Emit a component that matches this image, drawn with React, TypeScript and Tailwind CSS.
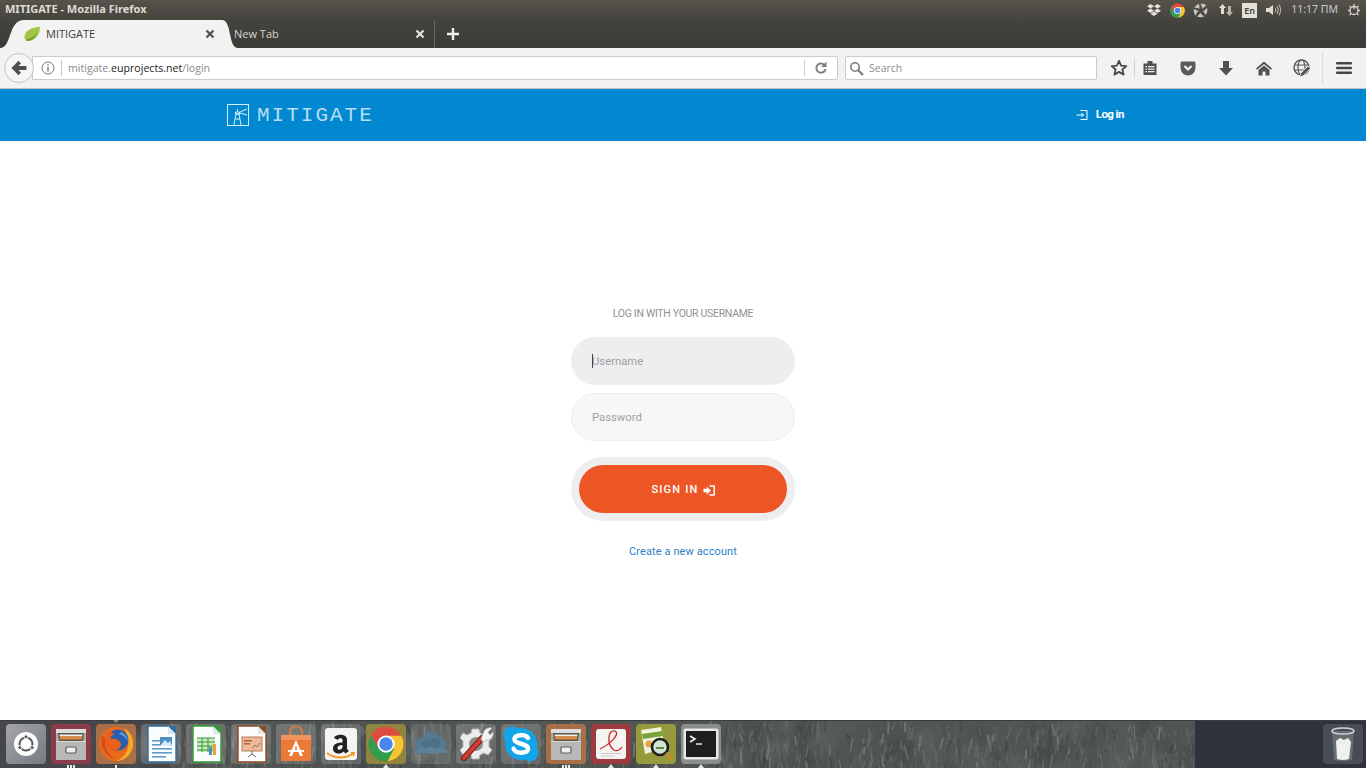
import React from "react";
import { FaDropbox } from "react-icons/fa";

function ChromeIcon({ size }: { size: number }) {
  return (
    <svg width={size} height={size} viewBox="0 0 48 48">
      <circle cx="24" cy="24" r="23" fill="#dd4b3e" />
      <path d="M24 13 H44.5 A23 23 0 0 1 26 47 L24 24 Z" fill="#f7c531" />
      <path d="M4 12.5 A23 23 0 0 0 26 47 L35 30 H14 Z" fill="#2f9e4f" />
      <circle cx="24" cy="24" r="11.5" fill="#fff" />
      <circle cx="24" cy="24" r="9" fill="#4b84ec" />
    </svg>
  );
}

function Tile({ bg, children, pips = 0, tri = false, top = false }: { bg: string; children: React.ReactNode; pips?: number; tri?: boolean; top?: boolean }) {
  return (
    <div className="relative flex h-10 w-10 shrink-0 items-center justify-center rounded-[4px]" style={{ background: bg }}>
      <div className="flex blur-[0.3px]">{children}</div>
      {pips > 0 && (
        <div className="absolute bottom-[-4px] left-1/2 flex -translate-x-1/2 gap-[1px]">
          {Array.from({ length: pips }).map((_, i) => (
            <div key={i} className="h-[3px] w-[2px] bg-[#e8e8e8]" />
          ))}
        </div>
      )}
      {tri && (
        <div className="absolute bottom-[-4px] left-1/2 h-0 w-0 -translate-x-1/2 border-x-[3px] border-b-[4px] border-x-transparent border-b-[#e8e8e8]" />
      )}
      {top && (
        <div className="absolute top-[-4px] left-1/2 h-0 w-0 -translate-x-1/2 border-x-[3px] border-t-[3px] border-x-transparent border-t-[#8a8a8a]" />
      )}
    </div>
  );
}

const glass = "linear-gradient(135deg,rgba(255,255,255,0.2),rgba(255,255,255,0.12))";

function Cabinet() {
  return (
    <svg width="36" height="36" viewBox="0 0 36 36">
      <rect x="3" y="3" width="30" height="31" rx="2" fill="#a9aba9" />
      <rect x="3" y="3" width="30" height="4" fill="#dcdcda" />
      <path d="M5 7 H31 L30 15 H6 Z" fill="#5b5650" />
      <path d="M6.5 8.5 H29.5 L29.2 10.5 H6.8 Z" fill="#f3efe6" />
      <path d="M6.8 10.5 H29.2 L28.8 13.5 H7.2 Z" fill="#e6873c" />
      <rect x="3" y="15" width="30" height="19" fill="#b8b9b7" />
      <rect x="3" y="15" width="30" height="1" fill="#d8d8d6" />
      <rect x="13" y="21" width="10" height="6" rx="1" fill="#efefed" stroke="#5c5c5c" strokeWidth="1.2" />
    </svg>
  );
}

function Doc({ color, children }: { color: string; children: React.ReactNode }) {
  return (
    <svg width="36" height="38" viewBox="0 0 36 38">
      <path d="M5 1 H25 L33 9 V37 H5 Z" fill="#fbfcfd" stroke={color} strokeWidth="1.4" />
      <path d="M25 1 L33 1 V9 Z" fill={color} />
      <path d="M25 1 V9 H33 Z" fill="#dfe5ea" />
      {children}
    </svg>
  );
}

const noise = (() => {
  let s = 12345;
  const r = () => {
    s = (s * 16807) % 2147483647;
    return s / 2147483647;
  };
  const cols = ["#6a6e69", "#5c625c", "#43474a", "#72766c", "#3d4143", "#666a62", "#7d8286", "#4f5a52"];
  const lines: { d: string; c: string; o: number; w: number }[] = [];
  for (let i = 0; i < 1300; i++) {
    const x = 170 + r() * 1025;
    const y = r() * 48;
    const dx = (r() - 0.5) * 7;
    const dy = 4 + r() * 12;
    lines.push({ d: `M${x.toFixed(1)} ${y.toFixed(1)}l${dx.toFixed(1)} ${dy.toFixed(1)}`, c: cols[Math.floor(r() * cols.length)], o: 0.3 + r() * 0.4, w: 0.8 + r() * 1.4 });
  }
  const blobs: { x: number; y: number; r: number; c: string; o: number }[] = [];
  for (let i = 0; i < 160; i++) {
    blobs.push({ x: r() * 1195, y: r() * 48, r: 4 + r() * 10, c: r() > 0.5 ? "#6a6f72" : "#383b3f", o: 0.12 + r() * 0.2 });
  }
  return { lines, blobs };
})();

export default function App() {
  return (
    <div className="flex h-[768px] w-[1366px] flex-col overflow-hidden bg-white font-['Roboto',sans-serif]">
      {/* title bar */}
      <div className="flex h-5 shrink-0 items-center justify-between bg-gradient-to-b from-[#55534c] to-[#45433d]">
        <div className="pb-[2px] pl-[5px] font-['Noto_Sans',sans-serif] text-[11px] font-bold text-[#dfdbd2]">MITIGATE - Mozilla Firefox</div>
        <div className="flex items-center font-['Noto_Sans',sans-serif] text-[#dfdbd2]">
          <FaDropbox size={14} className="mr-[9px] text-[#e6e3dd]" />
          <div className="mr-[8px] flex"><ChromeIcon size={15} /></div>
          <svg width="15" height="15" viewBox="0 0 16 16" className="mr-[11px]" fill="#c9c6bf">
            <path d="M8 1 C11 0.5 13 1 14 2.5 L10 6 C10 4.5 9 3 8 1 Z" />
            <path d="M15 5 C16 8 15 11 13.5 12.5 L10.5 8.5 C12 8.5 13.5 7 15 5 Z" />
            <path d="M12 14 C9.5 15.5 7 15.5 4.5 14.5 L8 10.5 C8.7 12 10 13.2 12 14 Z" />
            <path d="M3 13.5 C1 11.5 0.5 9 1 6.5 L6 8.5 C4.5 9.5 3.5 11.3 3 13.5 Z" />
            <path d="M1.5 5 C2.5 3 4.5 1.5 6.5 1 L7 6 C5.5 5.5 3.5 5 1.5 5 Z" />
          </svg>
          <svg width="14" height="14" viewBox="0 0 14 14" className="mr-[9px]" fill="#dfdbd2">
            <path d="M3.5 1 L7 5 H5 V11 H2 V5 H0 Z" />
            <path d="M10.5 13 L14 9 H12 V3 H9 V9 H7 Z" fill="#b7b4ad" />
          </svg>
          <div className="mr-[8px] flex h-[15px] w-[15px] items-center justify-center bg-[#e4e1da] text-[9px] font-semibold leading-none text-[#3e3d38]">En</div>
          <svg width="16" height="14" viewBox="0 0 16 14" className="mr-[10px]" fill="none" stroke="#c9c6bf" strokeWidth="1">
            <path d="M1 5 H4 L8 2 V12 L4 9 H1 Z" fill="#dfdbd2" stroke="none" />
            <path d="M10 4.5 C11 6 11 8 10 9.5 M12 3 C13.6 5.5 13.6 8.5 12 11 M14 1.5 C16 5 16 9 14 12.5" />
          </svg>
          <div className="mr-[9px] text-[10.5px] text-[#c4c8d0]">11:17 ПМ</div>
          <svg width="14" height="14" viewBox="0 0 14 14" className="mr-[5px]" fill="none" stroke="#d6d3cc" strokeWidth="1.3">
            <circle cx="7" cy="7.5" r="4" />
            <path d="M7 1 V6 M1 7.5 H3 M11 7.5 H13 M2.5 3 L4 4.5 M11.5 3 L10 4.5 M2.5 12 L4 10.5 M11.5 12 L10 10.5" />
          </svg>
        </div>
      </div>

      {/* tab bar */}
      <div className="flex h-7 shrink-0 items-end bg-gradient-to-b from-[#45433d] to-[#3b3a35] font-['Open_Sans',sans-serif] text-[11px]">
        <svg width="24" height="28" viewBox="0 0 24 28" className="shrink-0"><path d="M0 28 C12 28 8 0 24 0 V28 Z" fill="#f2f2f2" /></svg>
        <div className="flex h-7 w-[198px] shrink-0 items-center bg-[#f2f2f2] text-[#3c3c3c]">
          <svg width="17" height="16" viewBox="0 0 17 16" className="mr-[5px] shrink-0">
            <path d="M0.5 12 C0 5 7 1 16 1 C16 9 11 15 4 15 C3 15 1.5 14 0.5 12 Z" fill="#a3c644" />
            <path d="M1 14 C5 13 11 11 14 5 C12 10 9 14 4 15 Z" fill="#6f9a2e" />
          </svg>
          <span className="flex-1">MITIGATE</span>
          <svg width="10" height="10" viewBox="0 0 10 10" className="mr-[7px]"><path d="M1.5 1.5 L8.5 8.5 M8.5 1.5 L1.5 8.5" stroke="#555" strokeWidth="2.4" /></svg>
        </div>
        <svg width="16" height="28" viewBox="0 0 16 28" className="shrink-0"><path d="M0 0 C10 0 6 28 16 28 H0 Z" fill="#f2f2f2" /></svg>
        <div className="-ml-[4px] flex h-7 w-[191px] shrink-0 items-center text-[#d8d6cf]">
          <span className="flex-1">New Tab</span>
          <svg width="10" height="10" viewBox="0 0 10 10"><path d="M1.5 1.5 L8.5 8.5 M8.5 1.5 L1.5 8.5" stroke="#e4e2dc" strokeWidth="2.2" /></svg>
        </div>
        <div className="ml-[9px] flex h-7 items-center border-l border-[#6a6861] pl-[11px]">
          <svg width="14" height="14" viewBox="0 0 14 14"><path d="M7 1 V13 M1 7 H13" stroke="#f0eee9" strokeWidth="2.4" /></svg>
        </div>
      </div>

      {/* nav bar */}
      <div className="flex h-[41px] shrink-0 items-center border-b border-[#c4c4c4] bg-[#f2f2f2]">
        <div className="relative z-10 ml-[4px] flex h-[30px] w-[30px] shrink-0 items-center justify-center rounded-full border border-[#c4c4c4] bg-[#f6f6f6]">
          <svg width="16" height="16" viewBox="0 0 16 16" fill="#4f4f4f"><path d="M7.5 0.8 L0.5 8 L7.5 15.2 L10 12.8 L7.5 10 H15.5 V6 H7.5 L10 3.2 Z" /></svg>
        </div>
        <div className="-ml-[2px] flex h-6 w-[806px] shrink-0 items-center rounded-r-[2px] border border-[#cbcbcb] bg-white text-[10.6px]">
          <svg width="14" height="14" viewBox="0 0 14 14" className="ml-[8px] shrink-0" fill="none" stroke="#777">
            <circle cx="7" cy="7" r="6" /><path d="M7 6 V10.5 M7 3.5 V5" strokeWidth="1.3" />
          </svg>
          <div className="ml-[6px] h-[16px] w-px bg-[#c8c8c8]" />
          <div className="ml-[6px] flex-1 pt-[1px] font-['Open_Sans',sans-serif] text-[#8b8b8b]">
            mitigate.<span className="text-[#222]">euprojects.net</span>/login
          </div>
          <div className="h-[16px] w-px bg-[#d0d0d0]" />
          <svg width="14" height="14" viewBox="0 0 14 14" className="mx-[9px]" fill="none" stroke="#808080" strokeWidth="2">
            <path d="M11.5 8 A4.6 4.6 0 1 1 10.2 3.8" /><path d="M12.5 0.5 V6 H7 Z" fill="#808080" stroke="none" />
          </svg>
        </div>
        <div className="ml-[7px] flex h-6 w-[252px] shrink-0 items-center rounded-[2px] border border-[#cbcbcb] bg-white font-['Open_Sans',sans-serif] text-[10.5px] text-[#8c8c8c]">
          <svg width="15" height="15" viewBox="0 0 15 15" className="ml-[3px] mr-[5px]" fill="none" stroke="#7a7a7a" strokeWidth="1.6">
            <circle cx="6" cy="6" r="4.2" /><path d="M9 9 L14 14" strokeWidth="2.2" />
          </svg>
          <span className="pt-[1px]">Search</span>
        </div>
        <svg width="18" height="18" viewBox="0 0 18 18" className="ml-[13px] shrink-0" fill="none" stroke="#4a4a4a" strokeWidth="1.8">
          <path d="M9 1.8 L11.1 6.6 L16.3 7.1 L12.4 10.5 L13.6 15.6 L9 12.9 L4.4 15.6 L5.6 10.5 L1.7 7.1 L6.9 6.6 Z" strokeLinejoin="round" />
        </svg>
        <div className="ml-[6px] h-[18px] w-px bg-[#d0d0d0]" />
        <svg width="16" height="16" viewBox="0 0 16 16" className="ml-[7px] shrink-0" fill="#4f4f4f">
          <path d="M1.5 3.5 H5.5 V1 H10.5 V3.5 H14.5 V15 H1.5 Z" />
          <path d="M3.5 6 H5 V7.2 H3.5 Z M6 6 H12.5 V7.2 H6 Z M3.5 8.5 H5 V9.7 H3.5 Z M6 8.5 H12.5 V9.7 H6 Z M3.5 11 H5 V12.2 H3.5 Z M6 11 H12.5 V12.2 H6 Z" fill="#f2f2f2" />
        </svg>
        <svg width="16" height="15" viewBox="0 0 16 15" className="ml-[22px] shrink-0" fill="#5a5a5a">
          <path d="M1.8 0.5 H14.2 Q15.5 0.5 15.5 2 V6.8 A7.5 7.7 0 0 1 0.5 6.8 V2 Q0.5 0.5 1.8 0.5 Z" />
          <path d="M4.5 5 L8 8.5 L11.5 5" fill="none" stroke="#f2f2f2" strokeWidth="2.2" />
        </svg>
        <svg width="16" height="16" viewBox="0 0 16 16" className="ml-[22px] shrink-0" fill="#525252"><path d="M5 1 H11 V8 H15 L8 15.5 L1 8 H5 Z" /></svg>
        <svg width="16" height="15" viewBox="0 0 16 15" className="ml-[22px] shrink-0" fill="#525252">
          <path d="M8 0.5 L16 7.5 L14.8 8.8 L8 3 L1.2 8.8 L0 7.5 Z" />
          <path d="M8 4.5 L13.5 9 V14.5 H9.5 V10.5 H6.5 V14.5 H2.5 V9 Z" />
        </svg>
        <svg width="18" height="18" viewBox="0 0 18 18" className="ml-[21px] shrink-0" fill="none" stroke="#555" strokeWidth="1.1">
          <circle cx="8.5" cy="8.5" r="7.5" strokeWidth="1.4" />
          <ellipse cx="8.5" cy="8.5" rx="3.5" ry="7.5" />
          <path d="M1.5 6 H15.5 M1.5 11 H12" />
          <path d="M7.5 14.5 L15 7 L17.5 9.5 L10 17 L7 17.5 Z" fill="#555" stroke="#f2f2f2" strokeWidth="0.8" />
        </svg>
        <div className="ml-[11px] h-[32px] w-px bg-[#dcdcdc]" />
        <svg width="16" height="14" viewBox="0 0 16 14" className="ml-[13px] shrink-0" fill="#444">
          <rect y="1" width="16" height="2.4" rx="1" /><rect y="5.8" width="16" height="2.4" rx="1" /><rect y="10.6" width="16" height="2.4" rx="1" />
        </svg>
      </div>

      {/* site header */}
      <header className="flex h-[52px] shrink-0 items-center bg-[#0288d1] pl-[227px]">
        <svg width="22" height="22" viewBox="0 0 22 22" fill="none" stroke="#d7eefb" strokeWidth="1" className="shrink-0">
          <rect x="0.5" y="0.5" width="21" height="21" />
          <path d="M7 21 L9 10 H12 L14 21 M8 15 H13 M8.5 8 H12.5 V10 H8.5 Z M10.5 5 V8 M13 8 L20 5 M13 9 L20 11" />
        </svg>
        <div className="ml-[8px] font-['Liberation_Mono',monospace] text-[21px] leading-none tracking-[2px] text-[#b5def5]">MITIGATE</div>
        <div className="-mt-[1px] ml-[702px] flex items-center text-white">
          <svg width="12" height="12" viewBox="0 0 12 12" fill="none" stroke="#fff" strokeWidth="1">
            <path d="M4.5 1.5 H11 V10.5 H4.5" /><path d="M0.5 6 H7.5 M5.5 4 L7.5 6 L5.5 8" />
          </svg>
          <span className="ml-[8px] text-[11.5px] font-bold tracking-[-0.6px]">Log in</span>
        </div>
      </header>

      {/* login */}
      <main className="flex flex-1 flex-col items-center bg-white pt-[166px]">
        <div className="text-[10.5px] uppercase leading-[14px] tracking-[-0.3px] text-[#8f9295]">Log in with your username</div>
        <div className="relative mt-[16px] flex h-12 w-56 items-center rounded-full bg-[#eeeeee] pl-[21px] pt-[2px] text-[11.3px] text-[#9ca0a6]">
          <div className="absolute left-[21px] top-[17px] h-[14px] w-px bg-[#3c4458]" />
          Username
        </div>
        <div className="mt-2 flex h-12 w-56 items-center rounded-full border border-[#eeeeee] bg-[#f7f7f7] pl-[20px] pt-[2px] text-[11.3px] text-[#9ca0a6]">Password</div>
        <div className="mt-4 flex h-16 w-56 items-center justify-center rounded-full bg-[#eeeeee] p-2">
          <div className="flex h-12 w-full items-center justify-center rounded-full bg-[#ec5524] pt-[2px] text-[11px] font-medium tracking-[1.2px] text-white">
            SIGN IN
            <svg width="12" height="11" viewBox="0 0 13 12" className="ml-[4px]" fill="none" stroke="#fff">
              <path d="M0.5 4 H4 V1.5 L8.5 6 L4 10.5 V8 H0.5 Z" fill="#fff" stroke="none" />
              <path d="M7 1 H11.5 Q12.3 1 12.3 2 V10 Q12.3 11 11.5 11 H7" strokeWidth="1.6" />
            </svg>
          </div>
        </div>
        <div className="mt-[23px] text-[11px] tracking-[0.1px] text-[#2e81c4]">Create a new account</div>
      </main>

      {/* dock */}
      <div className="relative flex h-12 shrink-0 gap-[5px] border-t border-[#3b3c3d] bg-[#45474a] pl-[6px] pt-[3px]">
        <svg width="1366" height="48" className="absolute left-0 top-0">
          <defs>
            <filter id="soft"><feGaussianBlur stdDeviation="0.7" /></filter>
            <filter id="softer"><feGaussianBlur stdDeviation="4" /></filter>
          </defs>
          <rect x="170" width="1025" height="48" fill="#505452" />
          <g filter="url(#softer)">
            {noise.blobs.map((b, i) => (
              <circle key={i} cx={b.x} cy={b.y} r={b.r} fill={b.c} fillOpacity={b.o} />
            ))}
          </g>
          <g filter="url(#soft)">
            {noise.lines.map((n, i) => (
              <path key={i} d={n.d} stroke={n.c} strokeOpacity={n.o} strokeWidth={n.w} />
            ))}
          </g>
          <rect x="1195" width="171" height="48" fill="#2e323b" />
        </svg>
        <Tile bg="linear-gradient(135deg,#a3a5ab,#787a83)">
          <svg width="28" height="28" viewBox="0 0 28 28">
            <circle cx="14" cy="14" r="12" fill="#fdfdfd" />
            <circle cx="14" cy="14" r="6.5" fill="none" stroke="#54565d" strokeWidth="2" />
            <circle cx="14" cy="6.8" r="2" fill="#54565d" stroke="#fff" strokeWidth="1" />
            <circle cx="7.8" cy="17.6" r="2" fill="#54565d" stroke="#fff" strokeWidth="1" />
            <circle cx="20.2" cy="17.6" r="2" fill="#54565d" stroke="#fff" strokeWidth="1" />
          </svg>
        </Tile>
        <Tile bg="#8a3c4b" pips={3}><Cabinet /></Tile>
        <Tile bg="#a96f46" pips={1} top>
          <svg width="38" height="38" viewBox="0 0 38 38">
            <circle cx="19" cy="19" r="17" fill="#ea6a1d" />
            <path d="M27 3 C34 7 37 14 36 21 C35 29 28 36 19 36 C27 33 33 25 31 15 C30 10 29 6 27 3 Z" fill="#f6a927" />
            <circle cx="21" cy="15" r="10.5" fill="#2a5fae" />
            <path d="M24 7 C28 9 31 12 31 16 C28 12 26 10 22 9 Z" fill="#5b9ad8" />
            <path d="M11 5 C12 8 15 8 18 9 C15 10 13 12 14 14 C18 13 23 15 24 19 C24 24 18 27 13 25 C9 23 7 18 8 13 C8 10 9 7 11 5 Z" fill="#e95f1b" />
            <path d="M5 10 C3 18 6 30 18 34 C12 30 7 24 8 14 Z" fill="#d9471c" />
          </svg>
        </Tile>
        <Tile bg={glass}>
          <Doc color="#2b6ca3">
            <rect x="9" y="15" width="8" height="1.6" fill="#5f9cc9" /><rect x="9" y="19" width="8" height="1.6" fill="#5f9cc9" /><rect x="9" y="23" width="20" height="1.6" fill="#5f9cc9" /><rect x="9" y="27" width="20" height="1.6" fill="#5f9cc9" /><rect x="9" y="31" width="14" height="1.6" fill="#5f9cc9" />
            <rect x="17" y="12" width="12" height="9" fill="#4d8fc0" />
            <path d="M17 21 L22 15 L25 18 L27 16 L29 21 Z" fill="#d8ecf7" />
          </Doc>
        </Tile>
        <Tile bg={glass}>
          <Doc color="#2f9a35">
            <path d="M9 13 H27 V27 H9 Z" fill="#cde9c5" />
            <path d="M9 13 H27 M9 17 H27 M9 21 H27 M9 25 H27 M14 13 V27 M20 13 V27" stroke="#2f9a35" strokeWidth="1" />
            <rect x="21" y="22" width="3" height="8" fill="#4d8fc0" /><rect x="25" y="19" width="3" height="11" fill="#e8a33c" />
          </Doc>
        </Tile>
        <Tile bg={glass}>
          <Doc color="#8e4a24">
            <rect x="9" y="12" width="20" height="14" fill="#f0b79a" stroke="#a9663f" strokeWidth="0.8" />
            <rect x="11" y="15" width="8" height="1.5" fill="#a9663f" /><rect x="11" y="18" width="6" height="1.5" fill="#a9663f" />
            <path d="M19 23 L22 20 L24 22 L27 18" stroke="#5c9a3a" fill="none" />
            <path d="M19 26 V30 M15 32 L19 29 L23 32" stroke="#6b6b6b" fill="none" />
          </Doc>
        </Tile>
        <Tile bg={glass}>
          <svg width="34" height="36" viewBox="0 0 34 36">
            <path d="M11 10 V6 A6 6 0 0 1 23 6 V10" fill="none" stroke="#d97b3d" strokeWidth="2" />
            <path d="M2 9 H32 V35 H2 Z" fill="#ea7a35" />
            <path d="M2 9 H32 V14 H2 Z" fill="#f1935a" />
            <path d="M17 14 L24 30 H21 L19.5 26 H14.5 L13 30 H10 Z M15.5 23.5 H18.5 L17 19.5 Z" fill="#fff" />
            <rect x="9" y="24" width="16" height="1.8" fill="#fff" />
          </svg>
        </Tile>
        <Tile bg={glass}>
          <svg width="36" height="36" viewBox="0 0 36 36">
            <rect x="2" y="2" width="32" height="32" rx="3" fill="#f4f4f2" />
            <path d="M11 12 C12 8 23 7 24 13 V23 L26 25 L22.5 27.5 L20.5 25.5 C17 29 10 28 10 22.5 C10 17.5 15 16.5 19.5 16.5 V14 C19.5 11.5 15.5 11.5 15 14 Z M19.5 19 C16.5 19 14.5 20 14.5 22 C14.5 24.5 18 24.5 19.5 21.5 Z" fill="#222" />
            <path d="M4 27 C12 33 23 33 31 27" fill="none" stroke="#f19a25" strokeWidth="2" />
            <path d="M27 26 L32 26 L31 31 Z" fill="#f19a25" />
          </svg>
        </Tile>
        <Tile bg="#8f853f" tri><ChromeIcon size={36} /></Tile>
        <Tile bg="rgba(255,255,255,0.12)">
          <svg width="36" height="28" viewBox="0 0 36 28" fill="#56798f">
            <circle cx="18" cy="10" r="9" /><circle cx="9" cy="14" r="6.5" /><circle cx="27" cy="14" r="6.5" />
            <path d="M0 22 C3 16 33 16 36 22 C33 24 3 24 0 22 Z" fill="#5d8298" />
            <circle cx="13" cy="14" r="4" fill="#4c6f85" /><circle cx="22" cy="13" r="5" fill="#4c6f85" />
            <path d="M7 23 L8 28 M13 23 L14 27 M20 23 L20 28 M27 23 L26 27" stroke="#56798f" strokeWidth="1" opacity="0.6" />
          </svg>
        </Tile>
        <Tile bg={glass}>
          <svg width="38" height="38" viewBox="0 0 38 38">
            <path d="M15 4 H22 L23 8 L27 10 L31 8 L35 13 L32 16 V22 L35 25 L31 30 L27 28 L23 30 L22 34 H15 L14 30 L10 28 L6 30 L3 25 L6 22 V16 L3 13 L6 8 L10 10 L14 8 Z" fill="#ececea" stroke="#b4b4b2" />
            <circle cx="19" cy="19" r="7" fill="#8d8e90" />
            <path d="M7 33 L25 13" stroke="#7a1f1c" strokeWidth="6" strokeLinecap="round" />
            <path d="M7 33 L25 13" stroke="#d23a32" strokeWidth="4" strokeLinecap="round" />
            <path d="M24 14 L27 6 C29 3 33 2 35 3 L31 7 L33 10 L36 7 C37 11 34 15 30 15 L26 17 Z" fill="#f4f4f2" stroke="#a9a9a7" strokeWidth="0.8" />
          </svg>
        </Tile>
        <Tile bg={glass}>
          <svg width="38" height="38" viewBox="0 0 38 38">
            <circle cx="19" cy="19" r="16" fill="#12a5e8" />
            <circle cx="10" cy="10" r="8.5" fill="#12a5e8" /><circle cx="28" cy="28" r="8.5" fill="#12a5e8" />
            <path d="M26 13 C24 9 12 9 12.5 14.5 C13 20 26 17.5 26 24 C26 29 13 29 11.5 23.5" fill="none" stroke="#fff" strokeWidth="4.4" strokeLinecap="round" />
          </svg>
        </Tile>
        <Tile bg="#a66f46" pips={3}><Cabinet /></Tile>
        <Tile bg="#9b3b40" tri>
          <svg width="32" height="32" viewBox="0 0 32 32">
            <rect x="1" y="1" width="30" height="30" rx="3" fill="#f6f4f0" />
            <path d="M5 21 C14 17 26 6 20 3 C13 1 11 16 19 22 C22 24 26 21 27 19" fill="none" stroke="#c6282d" strokeWidth="1.3" />
            <rect x="6" y="25" width="20" height="1" fill="#c9c9c9" /><rect x="6" y="27.5" width="14" height="1" fill="#c9c9c9" />
          </svg>
        </Tile>
        <Tile bg="#969a3d" tri>
          <svg width="36" height="36" viewBox="0 0 36 36">
            <path d="M3 4 L23 1 L27 22 L7 28 Z" fill="#eef2dc" />
            <path d="M4 8 L24 5 L25 10 L5 13 Z" fill="#7ba33a" />
            <circle cx="11" cy="18" r="3.5" fill="#e7a53a" />
            <circle cx="22" cy="21" r="8" fill="#cfe6d2" stroke="#1f1f1f" strokeWidth="2.6" />
            <path d="M18 22 H26" stroke="#5a8a42" strokeWidth="2" />
            <path d="M28 27 L34 34" stroke="#c98a2b" strokeWidth="2.8" />
          </svg>
        </Tile>
        <Tile bg="#8c8d8d" tri>
          <svg width="36" height="32" viewBox="0 0 36 32">
            <rect x="0.5" y="0.5" width="35" height="31" rx="2" fill="#e8e8e6" />
            <rect x="3" y="3" width="30" height="26" fill="#1e1e1e" />
            <path d="M7 8 L12 11 L7 14" fill="none" stroke="#f2f2f2" strokeWidth="1.6" />
            <path d="M13 16 H19" stroke="#f2f2f2" strokeWidth="1.4" />
          </svg>
        </Tile>
        <div className="ml-auto mr-[3px]">
          <Tile bg="#484c54">
            <svg width="26" height="36" viewBox="0 0 26 36">
              <path d="M2 5 L4 34 Q13 36 22 34 L24 5 Z" fill="#7e8288" opacity="0.6" />
              <ellipse cx="13" cy="5" rx="11" ry="3" fill="none" stroke="#cfd2d4" strokeWidth="1.5" />
              <path d="M6 15 L10 12 L14 14 L18 12 L21 16 L19 33 Q13 35 7 33 Z" fill="#eff0ef" />
            </svg>
          </Tile>
        </div>
      </div>
    </div>
  );
}
